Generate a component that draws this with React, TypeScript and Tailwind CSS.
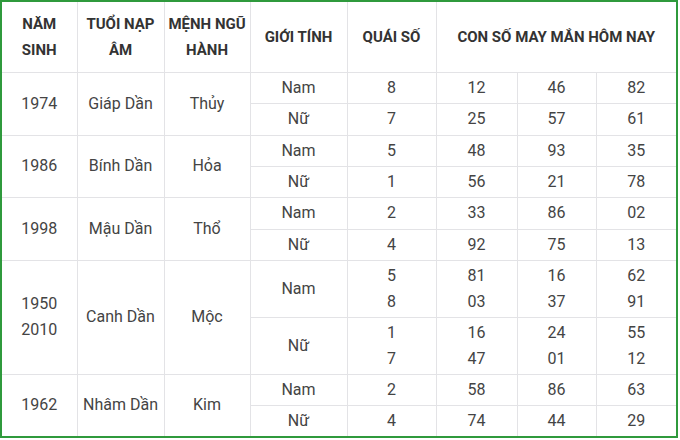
import React from "react";

type Sub = { gender: string; quai: string[]; nums: string[][] };
type Row = { years: string[]; tuoi: string; menh: string; subs: Sub[]; h: string[] };

const rows: Row[] = [
  {
    years: ["1974"], tuoi: "Giáp Dần", menh: "Thủy", h: ["h-[31px]", "h-[32px]"],
    subs: [
      { gender: "Nam", quai: ["8"], nums: [["12"], ["46"], ["82"]] },
      { gender: "Nữ", quai: ["7"], nums: [["25"], ["57"], ["61"]] },
    ],
  },
  {
    years: ["1986"], tuoi: "Bính Dần", menh: "Hỏa", h: ["h-[31px]", "h-[31px]"],
    subs: [
      { gender: "Nam", quai: ["5"], nums: [["48"], ["93"], ["35"]] },
      { gender: "Nữ", quai: ["1"], nums: [["56"], ["21"], ["78"]] },
    ],
  },
  {
    years: ["1998"], tuoi: "Mậu Dần", menh: "Thổ", h: ["h-[32px]", "h-[31px]"],
    subs: [
      { gender: "Nam", quai: ["2"], nums: [["33"], ["86"], ["02"]] },
      { gender: "Nữ", quai: ["4"], nums: [["92"], ["75"], ["13"]] },
    ],
  },
  {
    years: ["1950", "2010"], tuoi: "Canh Dần", menh: "Mộc", h: ["h-[57px]", "h-[57px]"],
    subs: [
      { gender: "Nam", quai: ["5", "8"], nums: [["81", "03"], ["16", "37"], ["62", "91"]] },
      { gender: "Nữ", quai: ["1", "7"], nums: [["16", "47"], ["24", "01"], ["55", "12"]] },
    ],
  },
  {
    years: ["1962"], tuoi: "Nhâm Dần", menh: "Kim", h: ["h-[31px]", "h-[31px]"],
    subs: [
      { gender: "Nam", quai: ["2"], nums: [["58"], ["86"], ["63"]] },
      { gender: "Nữ", quai: ["4"], nums: [["74"], ["44"], ["29"]] },
    ],
  },
];

const cell = "border border-[#e3e3e6] text-center align-middle p-0";

function Lines({ items }: { items: string[] }) {
  return (
    <>
      {items.map((t, i) => (
        <div key={i} className="leading-[26px]">{t}</div>
      ))}
    </>
  );
}

export default function App() {
  return (
    <div className="w-[680px] h-[440px] bg-white" style={{ fontFamily: "Roboto, 'Noto Sans', sans-serif" }}>
      <div className="w-[678px] h-[438px] border-2 border-[#2f9a3c] overflow-hidden">
        <table className="table-fixed border-collapse border-hidden w-[674px] text-[16px] text-[#444]">
          <colgroup>
            <col className="w-[75px]" />
            <col className="w-[87px]" />
            <col className="w-[86px]" />
            <col className="w-[97px]" />
            <col className="w-[89px]" />
            <col className="w-[81px]" />
            <col className="w-[79px]" />
            <col className="w-[80px]" />
          </colgroup>
          <thead>
            <tr className="h-[70px] text-[15px] font-bold text-[#333] leading-[26px]">
              <th className={cell}>NĂM<br />SINH</th>
              <th className={cell}>TUỔI NẠP<br />ÂM</th>
              <th className={cell}>MỆNH NGŨ<br />HÀNH</th>
              <th className={cell}>GIỚI TÍNH</th>
              <th className={cell}>QUÁI SỐ</th>
              <th className={cell} colSpan={3}>CON SỐ MAY MẮN HÔM NAY</th>
            </tr>
          </thead>
          <tbody>
            {rows.map((r) =>
              r.subs.map((s, si) => (
                <tr key={r.tuoi + si} className={r.h[si]}>
                  {si === 0 && (
                    <>
                      <td className={cell} rowSpan={2}><Lines items={r.years} /></td>
                      <td className={cell} rowSpan={2}>{r.tuoi}</td>
                      <td className={cell} rowSpan={2}>{r.menh}</td>
                    </>
                  )}
                  <td className={cell}>{s.gender}</td>
                  <td className={cell}><Lines items={s.quai} /></td>
                  {s.nums.map((n, ni) => (
                    <td key={ni} className={cell}><Lines items={n} /></td>
                  ))}
                </tr>
              ))
            )}
          </tbody>
        </table>
      </div>
    </div>
  );
}
